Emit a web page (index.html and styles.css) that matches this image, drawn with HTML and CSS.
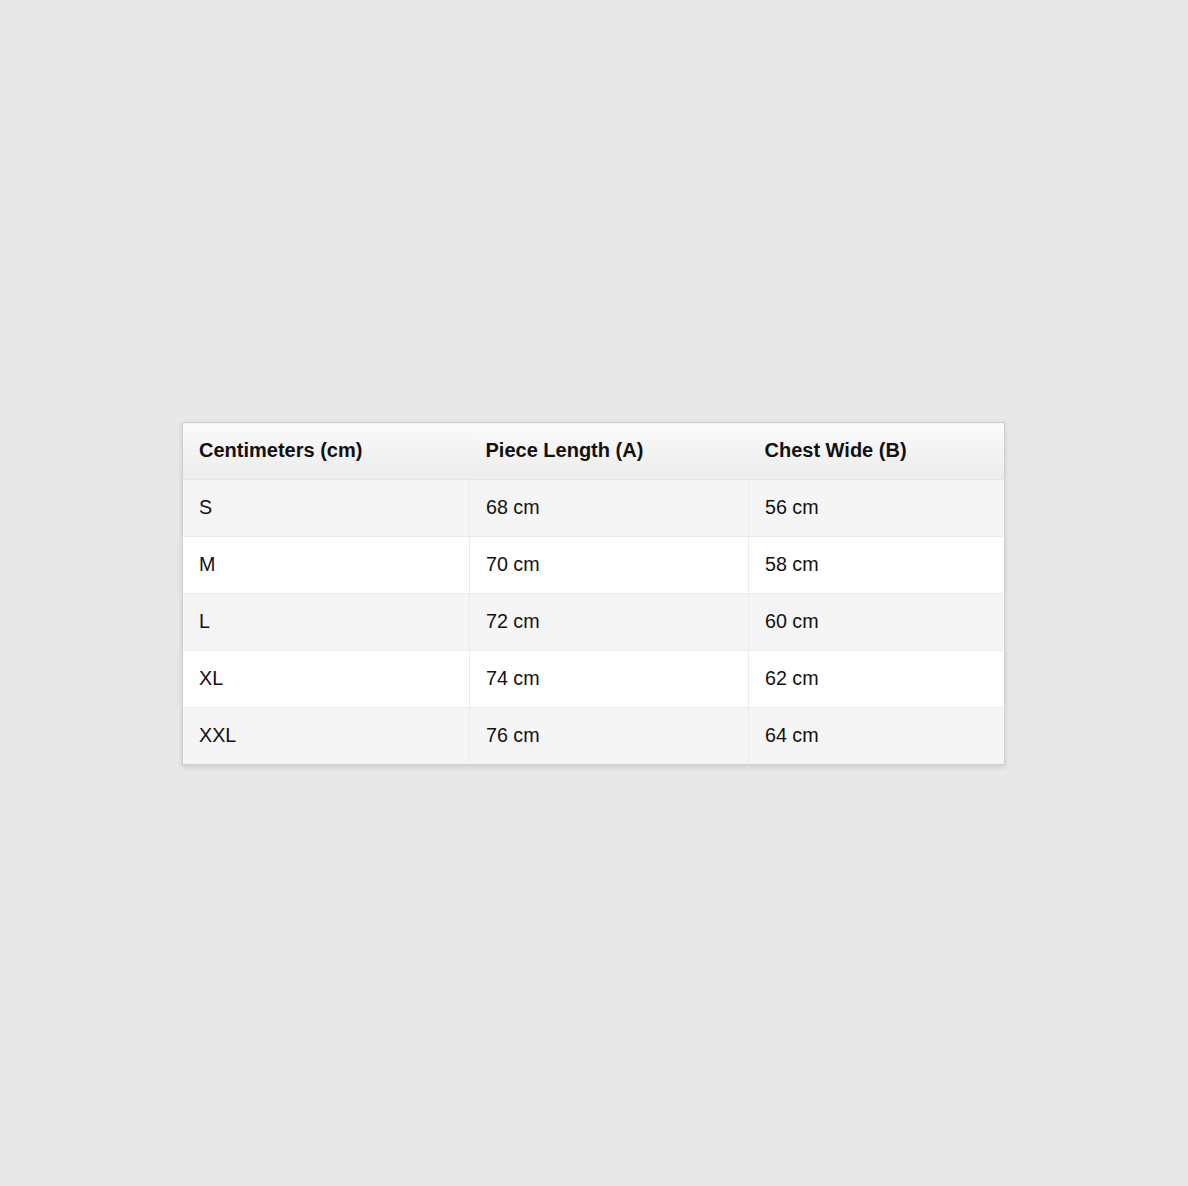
FILE: index.html
```html
<!DOCTYPE html>
<html>
<head>
<meta charset="utf-8">
<link rel="stylesheet" href="styles.css">
</head>
<body>
<main class="page">
  <table class="size-table">
    <thead>
      <tr><th>Centimeters (cm)</th><th>Piece Length (A)</th><th>Chest Wide (B)</th></tr>
    </thead>
    <tbody>
      <tr><td>S</td><td>68 cm</td><td>56 cm</td></tr>
      <tr><td>M</td><td>70 cm</td><td>58 cm</td></tr>
      <tr><td>L</td><td>72 cm</td><td>60 cm</td></tr>
      <tr><td>XL</td><td>74 cm</td><td>62 cm</td></tr>
      <tr><td>XXL</td><td>76 cm</td><td>64 cm</td></tr>
    </tbody>
  </table>
</main>
</body>
</html>
```
FILE: styles.css
```css
html, body {
  margin: 0;
  padding: 0;
  background: #e8e8e8;
}
.page {
  min-height: 1186px;
  padding-top: 422px;
  padding-left: 182px;
  box-sizing: border-box;
}
.size-table {
  width: 823px;
  border-collapse: collapse;
  border: 1px solid #cfcfcf;
  box-shadow: 0 2px 5px rgba(0,0,0,0.12);
  font-family: "Liberation Sans", Arial, sans-serif;
  font-size: 19.7px;
  color: #111;
}
.size-table th, .size-table td {
  text-align: left;
  padding: 0 16px 2px;
  height: 57px;
  box-sizing: border-box;
}
.size-table th {
  font-weight: bold;
  font-size: 20px;
  background: linear-gradient(#fafafa, #ececec);
  border-bottom: 1px solid #e4e4e4;
}
.size-table th:nth-child(1), .size-table td:nth-child(1) { width: 287px; }
.size-table th:nth-child(2), .size-table td:nth-child(2) { width: 279px; }
.size-table td + td { border-left: 1px solid #ebebeb; }
.size-table tbody tr:nth-child(odd) { background: #f5f5f5; }
.size-table tbody tr:nth-child(even) { background: #ffffff; }
.size-table tbody tr + tr td { border-top: 1px solid #ececec; }
```
